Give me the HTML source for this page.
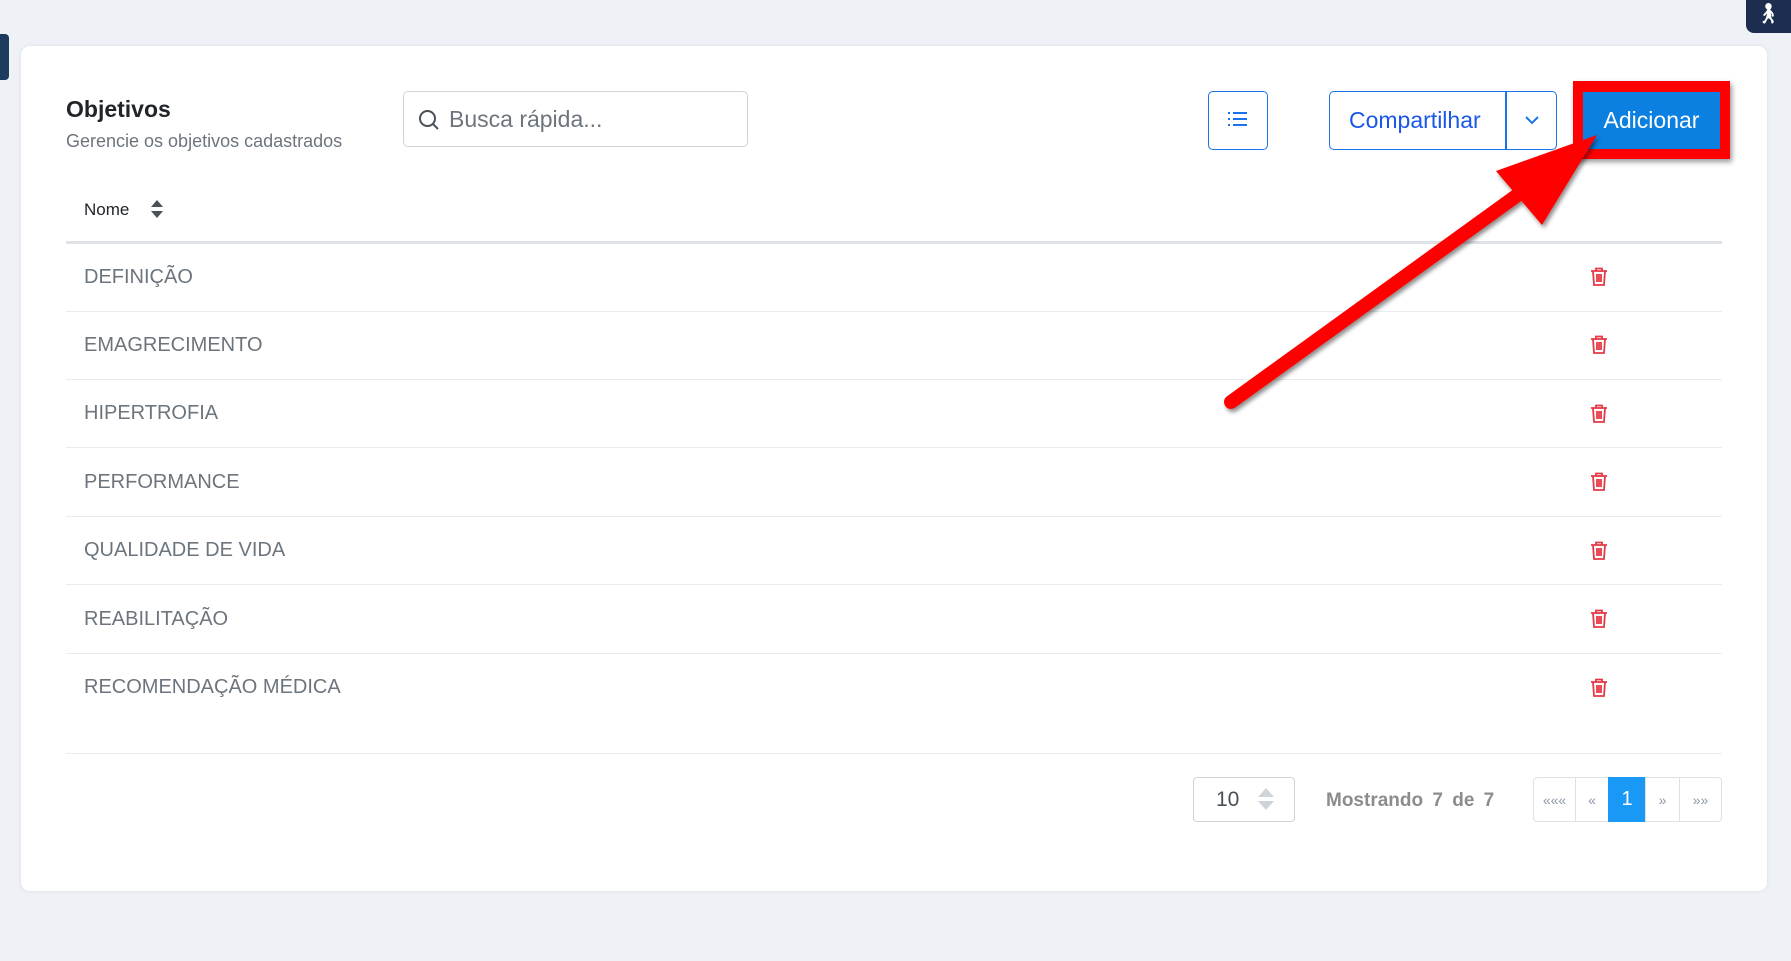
<!DOCTYPE html>
<html><head><meta charset="utf-8"><style>
*{box-sizing:border-box;margin:0;padding:0}
body{width:1791px;height:961px;background:#eef1f6;font-family:"Liberation Sans",sans-serif;position:relative;overflow:hidden}
.abs{position:absolute}
.card{left:21px;top:46px;width:1746px;height:845px;background:#fff;border-radius:9px;box-shadow:0 0 4px rgba(0,0,0,.08)}
.row{position:absolute;left:66px;width:1656px;height:68px;border-bottom:1px solid #e9ecef}
.row span{position:absolute;left:18px;top:22px;font-size:20px;color:#6c757d}
.row svg{position:absolute;left:1525px;top:23px}
.pg{position:absolute;top:777px;height:45px;border:1px solid #dee2e6;display:flex;align-items:center;justify-content:center;color:#8a96a8;font-size:14px}
</style></head><body>
<div class="abs" style="left:0;top:34px;width:9px;height:46px;background:#1d3a5f;border-radius:0 4px 4px 0"></div>
<div class="abs" style="left:1746px;top:0;width:45px;height:33px;background:#1d2d4f;border-radius:0 0 0 8px;color:#fff;font-size:20px;text-align:center;line-height:28px">&#x1F6B6;&#xFE0E;</div>
<div class="abs card"></div>
<div class="abs" style="left:66px;top:96px;font-size:23px;font-weight:bold;color:#212529">Objetivos</div>
<div class="abs" style="left:66px;top:131px;font-size:18px;color:#6c757d">Gerencie os objetivos cadastrados</div>
<div class="abs" style="left:403px;top:91px;width:345px;height:56px;border:1px solid #ced4da;border-radius:5px"></div>
<svg class="abs" style="left:418px;top:109px" width="22" height="22" viewBox="0 0 22 22"><circle cx="9.5" cy="9.5" r="7.5" fill="none" stroke="#495057" stroke-width="2"/><path d="M15 15l5 5" stroke="#495057" stroke-width="2"/></svg>
<div class="abs" style="left:449px;top:106px;font-size:23px;color:#6c757d">Busca rápida...</div>
<div class="abs" style="left:1208px;top:91px;width:60px;height:59px;border:1px solid #1a73e8;border-radius:5px"></div>
<svg class="abs" style="left:1228px;top:111px" width="20" height="16" viewBox="0 0 20 16"><g fill="#1a73e8"><rect x="0" y="1" width="2" height="2"/><rect x="0" y="7" width="2" height="2"/><rect x="0" y="13" width="2" height="2"/><rect x="5" y="1" width="14" height="2"/><rect x="5" y="7" width="14" height="2"/><rect x="5" y="13" width="14" height="2"/></g></svg>
<div class="abs" style="left:1329px;top:91px;width:228px;height:59px;border:1.5px solid #1a73e8;border-radius:5px"></div>
<div class="abs" style="left:1505px;top:91px;width:1.5px;height:59px;background:#1a73e8"></div>
<div class="abs" style="left:1349px;top:107px;font-size:23px;color:#1a56e8">Compartilhar</div>
<svg class="abs" style="left:1524px;top:115px" width="16" height="10" viewBox="0 0 16 10"><path d="M2 2l6 6 6-6" fill="none" stroke="#1a73e8" stroke-width="2"/></svg>
<div class="abs" style="left:1573px;top:81px;width:157px;height:78px;background:#ff0000;box-shadow:2px 3px 5px rgba(0,0,0,.4)"></div>
<div class="abs" style="left:1583px;top:92px;width:137px;height:57px;background:#0b80e0;color:#fff;font-size:23px;text-align:center;line-height:57px">Adicionar</div>
<div class="abs" style="left:84px;top:200px;font-size:17px;color:#212529">Nome</div>
<svg class="abs" style="left:150px;top:199px" width="14" height="20" viewBox="0 0 14 20"><path d="M1 8l6-7 6 7z M1 12l6 7 6-7z" fill="#495057"/></svg>
<div class="abs" style="left:66px;top:241px;width:1656px;height:3px;background:#dee2e6"></div>
<div class="row" style="top:244px"><span>DEFINIÇÃO</span></div>
<div class="row" style="top:312px"><span>EMAGRECIMENTO</span></div>
<div class="row" style="top:380px"><span>HIPERTROFIA</span></div>
<div class="row" style="top:449px"><span>PERFORMANCE</span></div>
<div class="row" style="top:517px"><span>QUALIDADE DE VIDA</span></div>
<div class="row" style="top:586px"><span>REABILITAÇÃO</span></div>
<div class="row" style="top:654px;border:none"><span>RECOMENDAÇÃO MÉDICA</span></div>
<div class="abs" style="left:66px;top:753px;width:1656px;height:1px;background:#e9ecef"></div>
<div class="abs" id="trash"></div>
<div class="abs" style="left:1193px;top:777px;width:102px;height:45px;border:1px solid #ced4da;border-radius:4px"></div>
<div class="abs" style="left:1216px;top:788px;font-size:21px;color:#495057">10</div>
<svg class="abs" style="left:1257px;top:786px" width="18" height="26" viewBox="0 0 18 26"><path d="M1 11l8-9 8 9z M1 15l8 9 8-9z" fill="#ced4da"/></svg>
<div class="abs" style="left:1326px;top:790px;font-size:19px;font-weight:bold;color:#8c8c8c;word-spacing:4px">Mostrando 7 de 7</div>
<div class="pg" style="left:1533px;width:43px;border-radius:4px 0 0 4px">«««</div>
<div class="pg" style="left:1575px;width:34px">«</div>
<div class="pg" style="left:1608px;width:38px;background:#1a98f5;border-color:#1a98f5;color:#fff;font-size:20px">1</div>
<div class="pg" style="left:1645px;width:35px">»</div>
<div class="pg" style="left:1679px;width:43px;border-radius:0 4px 4px 0">»»</div>
<svg class="abs" style="left:0;top:0" width="1791" height="961">
<defs><filter id="sh"><feDropShadow dx="2" dy="3" stdDeviation="2" flood-opacity=".45"/></filter>
<g id="t"><path d="M1 4h16M6 4V1.5h6V4M3 4l1 14h10l1-14M7 7v8M9 7v8M11 7v8" fill="none" stroke="#e53946" stroke-width="1.8"/></g></defs>
<g filter="url(#sh)"><path d="M1231 402L1530 186" stroke="#ff0000" stroke-width="14" stroke-linecap="round"/><path d="M1597 135L1496 171 1542 225z" fill="#ff0000"/></g>
<g transform="translate(1590,267)"><use href="#t"/></g>
<g transform="translate(1590,335)"><use href="#t"/></g>
<g transform="translate(1590,404)"><use href="#t"/></g>
<g transform="translate(1590,472)"><use href="#t"/></g>
<g transform="translate(1590,541)"><use href="#t"/></g>
<g transform="translate(1590,609)"><use href="#t"/></g>
<g transform="translate(1590,678)"><use href="#t"/></g>
</svg>
</body></html>
